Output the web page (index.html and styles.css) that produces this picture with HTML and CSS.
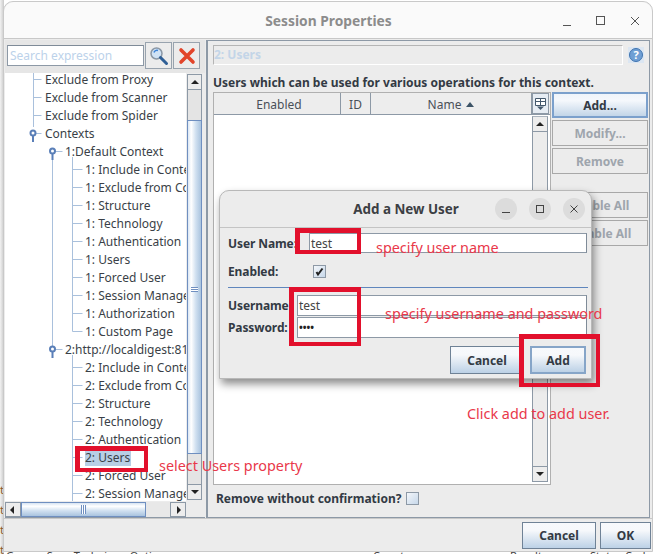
FILE: index.html
```html
<!DOCTYPE html>
<html lang="en">
<head>
<meta charset="utf-8">
<title>Session Properties</title>
<link rel="stylesheet" href="styles.css">
</head>
<body>
<div class="behind">
  <span class="b1">Groups Scan Technique Options</span>
  <span class="b2">Count</span>
  <span class="b3">Result</span>
  <span class="b4">Status Code</span>
</div>
<div class="strip"><span>t</span><span>t</span><span>t</span><span>t</span></div>
<main class="window">
  <header class="titlebar">
    <h1 class="title">Session Properties</h1>
    <div class="wm wm-main">
      <svg width="14" height="14" viewBox="0 0 14 14"><path d="M3 11.500h8" stroke="#555" fill="none"/></svg>
      <svg width="14" height="14" viewBox="0 0 14 14"><rect x="2.500" y="2.500" width="8" height="8" stroke="#555" fill="none"/></svg>
      <svg width="14" height="14" viewBox="0 0 14 14"><path d="M3 3l8 8M11 3l-8 8" stroke="#555" fill="none"/></svg>
    </div>
  </header>
  <div class="content">
    <section class="left">
      <div class="searchbar">
        <input class="search" placeholder="Search expression" aria-label="Search expression">
        <button class="iconbtn" aria-label="Search">
          <svg width="20" height="20" viewBox="0 0 20 20"><circle cx="7.500" cy="7.500" r="5.500" fill="#cfe2f5" stroke="#8a97a5" stroke-width="1.500"/><path d="M5 6.500a3 3 0 0 1 4-2" stroke="#3b82d6" stroke-width="1.500" fill="none"/><path d="M11.500 11.500l6 6" stroke="#2f5f96" stroke-width="3" stroke-linecap="round"/></svg>
        </button>
        <button class="iconbtn" aria-label="Clear">
          <svg width="18" height="18" viewBox="0 0 18 18"><path d="M3 3l12 12M15 3L3 15" stroke="#e2452b" stroke-width="3.600" stroke-linecap="round"/></svg>
        </button>
      </div>
      <div class="treegrid">
        <div class="tree">
          <svg class="treelines" width="186" height="428" viewBox="0 0 186 428">
            <g stroke="#a9c0dc" fill="none">
              <path d="M33.500 0V54M33.500 6.500h8M33.500 24.500h8M33.500 42.500h8M33.500 60.500h8"/>
              <path d="M52.500 78V276M52.500 78.500h10M52.500 276.500h10"/>
              <path d="M72.500 84V258.500M72.500 96.500h10M72.500 114.500h10M72.500 132.500h10M72.500 150.500h10M72.500 168.500h10M72.500 186.500h10M72.500 204.500h10M72.500 222.500h10M72.500 240.500h10M72.500 258.500h10"/>
              <path d="M72.500 282V428M72.500 294.500h10M72.500 312.500h10M72.500 330.500h10M72.500 348.500h10M72.500 366.500h10M72.500 384.500h10M72.500 402.500h10M72.500 420.500h10"/>
            </g>
            <g fill="#fff" stroke="#5a7fb8" stroke-width="2">
              <path d="M33 63v6M52.500 81v6M52.500 279v6" />
              <circle cx="33" cy="60" r="2.500"/>
              <circle cx="52.500" cy="78" r="2.500"/>
              <circle cx="52.500" cy="276" r="2.500"/>
            </g>
          </svg>
          <div class="row l1 first">Exclude from Proxy</div>
          <div class="row l1">Exclude from Scanner</div>
          <div class="row l1">Exclude from Spider</div>
          <div class="row l1">Contexts</div>
          <div class="row l2">1:Default Context</div>
          <div class="row l3">1: Include in Context</div>
          <div class="row l3">1: Exclude from Context</div>
          <div class="row l3">1: Structure</div>
          <div class="row l3">1: Technology</div>
          <div class="row l3">1: Authentication</div>
          <div class="row l3">1: Users</div>
          <div class="row l3">1: Forced User</div>
          <div class="row l3">1: Session Management</div>
          <div class="row l3">1: Authorization</div>
          <div class="row l3">1: Custom Page</div>
          <div class="row l2">2:http://localdigest:8181</div>
          <div class="row l3">2: Include in Context</div>
          <div class="row l3">2: Exclude from Context</div>
          <div class="row l3">2: Structure</div>
          <div class="row l3">2: Technology</div>
          <div class="row l3">2: Authentication</div>
          <div class="row l3"><span class="selected">2: Users</span></div>
          <div class="row l3">2: Forced User</div>
          <div class="row l3">2: Session Management</div>
        </div>
        <div class="vscroll tree-v">
          <span class="arrow up"></span>
          <span class="track short"></span>
          <span class="thumb"><i class="grip-h"></i></span>
          <span class="track rest"></span>
          <span class="arrow down"></span>
        </div>
        <div class="hscroll">
          <span class="arrow left-a"></span>
          <span class="hthumb"><i class="grip-v"></i></span>
          <span class="htrack"></span>
          <span class="arrow right-a"></span>
        </div>
      </div>
    </section>
    <section class="right">
      <div class="panelhead">
        <div class="paneltitle">2: Users</div>
        <svg class="help" width="16" height="16" viewBox="0 0 16 16"><rect width="16" height="16" fill="#dbe6f2"/><circle cx="8" cy="8" r="6.500" fill="#6f9fd4" stroke="#3f74b0"/><text x="8" y="12" class="helpq" text-anchor="middle">?</text></svg>
      </div>
      <p class="desc">Users which can be used for various operations for this context.</p>
      <div class="tablearea">
        <div class="table">
          <div class="thead">
            <span class="th c-enabled">Enabled</span>
            <span class="th c-id">ID</span>
            <span class="th c-name">Name <i class="sort"></i></span>
            <span class="corner">
              <svg width="13" height="14" viewBox="0 0 13 14"><path d="M1.500 1.500h10v7h-10zM1.500 4.500h10M6.500 1.500v7" stroke="#44586c" fill="#fff"/><path d="M3 9.500h7L6.500 13z" fill="#44586c"/></svg>
            </span>
          </div>
          <div class="tbody">
            <div class="tcells"></div>
            <div class="vscroll table-v">
              <span class="arrow up"></span>
              <span class="track grow"></span>
              <span class="arrow down"></span>
            </div>
          </div>
        </div>
        <div class="sidebtns">
          <button class="btn primary">Add...</button>
          <button class="btn off">Modify...</button>
          <button class="btn off">Remove</button>
          <div class="spacer"></div>
          <button class="btn off">Enable All</button>
          <button class="btn off">Disable All</button>
        </div>
      </div>
      <div class="confirm">
        <span class="lbl">Remove without confirmation?</span>
        <span class="check"></span>
      </div>
    </section>
  </div>
  <footer class="footer">
    <button class="btn blue cancel">Cancel</button>
    <button class="btn blue ok">OK</button>
  </footer>
</main>

<div class="dialog">
  <header class="dlghead">
    <h2 class="dlgtitle">Add a New User</h2>
    <div class="wm wm-dlg">
      <span class="circ"><svg width="12" height="12" viewBox="0 0 12 12"><path d="M2 9.500h8" stroke="#444" fill="none"/></svg></span>
      <span class="circ"><svg width="12" height="12" viewBox="0 0 12 12"><rect x="2.500" y="2.500" width="7" height="7" stroke="#444" fill="none"/></svg></span>
      <span class="circ"><svg width="12" height="12" viewBox="0 0 12 12"><path d="M2.500 2.500l7 7M9.500 2.500l-7 7" stroke="#444" fill="none"/></svg></span>
    </div>
  </header>
  <div class="dlgbody">
    <div class="frow fr1"><label class="lbl flabel">User Name:</label><div class="field">test</div></div>
    <div class="frow fr2"><label class="lbl flabel">Enabled:</label><span class="tick"><svg width="11" height="11" viewBox="0 0 11 11"><path d="M2.500 6l1.500 2.500 4.500-6" stroke="#222" stroke-width="2" fill="none"/></svg></span></div>
    <hr class="sep">
    <div class="frow fr3"><label class="lbl flabel short">Username:</label><div class="field">test</div></div>
    <div class="frow fr4"><label class="lbl flabel short">Password:</label><div class="field dots">••••</div></div>
    <div class="dlgbtns">
      <button class="btn blue dcancel">Cancel</button>
      <button class="btn blue dadd">Add</button>
    </div>
  </div>
</div>

<div class="mark m-name"></div>
<div class="mark m-cred"></div>
<div class="mark m-add"></div>
<div class="mark m-users"></div>
<span class="note n1">specify user name</span>
<span class="note n2">specify username and password</span>
<span class="note n3">Click add to add user.</span>
<span class="note n4">select Users property</span>
</body>
</html>
```
FILE: styles.css
```css
* { box-sizing: border-box; }
html, body { margin: 0; height: 100%; }
body {
  position: relative;
  width: 653px;
  height: 554px;
  overflow: hidden;
  background: #fff;
  font-family: "Noto Sans", sans-serif;
  font-size: 12px;
  color: #3a3f47;
}
button { font-family: inherit; margin: 0; padding: 0; }
.behind {
  position: absolute;
  left: 0;
  top: 549px;
  width: 653px;
  height: 5px;
  overflow: hidden;
  font-size: 11px;
  line-height: 14px;
  white-space: nowrap;
  color: #444;
}
.behind span { position: absolute; top: 0; }
.b1 { left: 6px; }
.b2 { left: 373px; }
.b3 { left: 510px; }
.b4 { left: 590px; }
.strip {
  position: absolute;
  left: 0;
  top: 0;
  width: 4px;
  height: 554px;
  display: flex;
  flex-direction: column;
  align-items: flex-end;
  gap: 6px;
  overflow: hidden;
  padding-top: 483px;
  background: linear-gradient(90deg, #f2f2f2, #c9c9c9);
  font-size: 11px;
  line-height: 14px;
  color: #8a5a2a;
}
.window {
  position: absolute;
  left: 3px;
  top: 1px;
  width: 650px;
  height: 551px;
  display: flex;
  flex-direction: column;
  background: #ececec;
  border: 1px solid #c9c9c9;
  border-radius: 10px 10px 0 0;
}
.titlebar {
  height: 37px;
  flex: none;
  position: relative;
  display: flex;
  align-items: center;
  justify-content: center;
  background: #fafafa;
  border-bottom: 1px solid #c8c8c8;
  border-radius: 10px 10px 0 0;
}
.title { margin: 0 0 0 1px; font-size: 13.800px; font-weight: 700; color: #8c8c8c; }
.wm { position: absolute; display: flex; align-items: center; }
.wm-main { right: 10px; top: 12px; gap: 20px; }
.content {
  flex: 1;
  display: flex;
  min-height: 0;
  padding: 1px 0 0 1px;
  gap: 1px;
}
.left {
  width: 200px;
  height: 478px;
  flex: none;
  display: flex;
  flex-direction: column;
  border-bottom: 1px solid #8d99a6;
}
.searchbar {
  height: 33px;
  flex: none;
  display: flex;
  align-items: flex-start;
  gap: 1px;
  padding: 2px 0 0 2px;
  background: #e6e6e6;
}
.search {
  width: 137px;
  height: 21px;
  margin-top: 3px;
  padding: 0 2px;
  font: 12px "Noto Sans", sans-serif;
  background: #fff;
  border: 1px solid #8d99a6;
  border-top-color: #7f8b98;
}
.search::placeholder { color: #bcd2ea; opacity: 1; }
.iconbtn {
  width: 27px;
  height: 27px;
  display: flex;
  align-items: center;
  justify-content: center;
  background: #ececec;
  border: 1px solid #98a3ae;
}
.treegrid {
  flex: 1;
  display: grid;
  grid-template-columns: 182px 15px 3px;
  grid-template-rows: 428px 16px;
}
.tree {
  position: relative;
  background: #fff;
  overflow: hidden;
  width: 181px;
}
.treelines { position: absolute; left: -5px; top: 0; }
.row {
  position: relative;
  height: 18px;
  line-height: 16px;
  white-space: nowrap;
}
.first { margin-top: -1px; }
.l1 { padding-left: 40px; }
.l2 { padding-left: 60px; }
.l3 { padding-left: 80px; }
.selected { display: inline-block; padding-right: 1px; height: 16px; background: #b8cfe5; }
.vscroll { display: flex; flex-direction: column; background: #eaeaea; }
.tree-v {
  width: 15px;
  height: 426px;
  margin-top: 1px;
  border: 1px solid #8d99a6;
}
.arrow {
  position: relative;
  flex: none;
  display: block;
  height: 15px;
  background: #ededed;
}
.arrow::after { content: ""; position: absolute; left: 3px; border-left: 4px solid transparent; border-right: 4px solid transparent; }
.arrow.up { border-bottom: 1px solid #8d99a6; }
.arrow.down { border-top: 1px solid #8d99a6; }
.up::after { top: 5px; border-bottom: 4px solid #222; }
.down::after { top: 5px; border-top: 4px solid #222; }
.track.short { height: 30px; flex: none; background: #e4e4e4; }
.track.rest { height: 30px; flex: none; background: #e4e4e4; }
.track.grow { flex: 1; background: #ececec; }
.thumb {
  flex: 1;
  position: relative;
  border: 1px solid #6f8fc0;
  margin: 0 -1px;
  background: linear-gradient(90deg, #dbe7f4, #fff 25%, #d0e0f0 60%, #a9c3de);
}
.grip-h {
  position: absolute;
  left: 3px;
  right: 3px;
  top: 50%;
  height: 5px;
  border-top: 1px solid #6f8fc0;
  border-bottom: 1px solid #6f8fc0;
  background: linear-gradient(#fff 40%, #6f8fc0 40%, #6f8fc0 70%, #fff 70%);
}
.hscroll {
  grid-column: 1;
  grid-row: 2;
  display: flex;
  width: 181px;
  height: 15px;
  margin-top: 1px;
  background: #e8e8e8;
}
.hscroll .arrow { width: 16px; height: 15px; border: 1px solid #8d99a6; }
.left-a::after {
  left: 4px; top: 3px;
  border: 0;
  border-top: 4px solid transparent; border-bottom: 4px solid transparent; border-right: 4px solid #222;
}
.right-a::after {
  left: 6px; top: 3px;
  border: 0;
  border-top: 4px solid transparent; border-bottom: 4px solid transparent; border-left: 4px solid #222;
}
.hthumb {
  width: 125px;
  flex: none;
  position: relative;
  border: 1px solid #6f8fc0;
  background: linear-gradient(#d7e4f2, #fff 25%, #d0e0f0 60%, #a9c3de);
}
.grip-v {
  position: absolute;
  top: 2px;
  bottom: 2px;
  left: 59px;
  width: 5px;
  border-left: 1px solid #6f8fc0;
  border-right: 1px solid #6f8fc0;
  background: linear-gradient(90deg, #fff 40%, #6f8fc0 40%, #6f8fc0 60%, #fff 60%);
}
.htrack { flex: 1; background: #e8e8e8; }
.right {
  flex: none;
  width: 444px;
  height: 478px;
  padding: 4px 0 0 5px;
  background: #ececec;
  border: 1px solid #8d99a6;
  border-left-width: 2px;
}
.panelhead { display: flex; align-items: center; gap: 5px; height: 20px; }
.paneltitle {
  width: 410px;
  height: 20px;
  line-height: 18px;
  font-weight: 700;
  color: #c3d5e8;
  border: 1px solid #b9b9b9;
  border-color: #b5b5b5 #fff #fff #b5b5b5;
  background: #ececec;
}
.help { width: 16px; height: 16px; }
.helpq { font: 700 11px "Noto Sans", sans-serif; fill: #fff; }
.desc {
  margin: 7px 0 0;
  height: 20px;
  line-height: 22px;
  font-weight: 700;
  color: #333a44;
  white-space: nowrap;
}
.tablearea { display: flex; gap: 1px; height: 393px; }
.table {
  width: 338px;
  height: 393px;
  flex: none;
  display: flex;
  flex-direction: column;
  border: 1px solid #b0b0b0;
  background: #fff;
}
.thead { display: flex; height: 22px; flex: none; background: #ededed; border-bottom: 1px solid #8d99a6; }
.th {
  display: flex;
  align-items: center;
  justify-content: center;
  gap: 5px;
  padding-top: 1px;
  border-right: 1px solid #8d99a6;
  color: #4a5058;
}
.c-enabled { width: 127px; padding-left: 4px; }
.c-id { width: 30px; }
.c-name { width: 161px; }
.sort {
  width: 0; height: 0;
  border-left: 4.500px solid transparent;
  border-right: 4.500px solid transparent;
  border-bottom: 5px solid #3c5366;
}
.corner {
  width: 17px;
  flex: none;
  display: flex;
  justify-content: center;
  padding-top: 3px;
  background: #e6ecf3;
  border: 1px solid #8d99a6;
}
.tbody { flex: 1; display: flex; min-height: 0; }
.tcells { flex: 1; background: #fff; }
.table-v {
  width: 16px;
  margin: 1px 2px 2px 0;
  border: 1px solid #8d99a6;
  border-top-color: #aab3bd;
}
.sidebtns { display: flex; flex-direction: column; gap: 2px; width: 96px; }
.btn {
  height: 26px;
  flex: none;
  font-size: 12px;
  font-weight: 700;
  border: 1px solid #8d99a6;
  color: #333a44;
}
.primary {
  border: 2px solid #7ba0cc;
  background: linear-gradient(#eff4fa, #f5f8fc 30%, #c2d5e8);
}
.off { background: #ececec; color: #9ea5ad; border-color: #a8a8a8; }
.spacer { height: 14px; flex: none; }
.confirm { display: flex; align-items: center; gap: 5px; height: 26px; padding-left: 3px; }
.lbl { font-weight: 700; color: #333a44; white-space: nowrap; }
.check {
  width: 13px; height: 13px;
  border: 1px solid #8d99a6;
  background: linear-gradient(135deg, #f3f6fa, #c7d8ea);
}
.footer {
  height: 33px;
  flex: none;
  display: flex;
  justify-content: flex-end;
  gap: 4px;
  padding: 3px 1px 0 0;
  border-top: 1px solid #c8c8c8;
}
.blue {
  height: 27px;
  background: linear-gradient(#f7f9fc, #f6f8fb 30%, #bcd1e6);
  border: 1px solid #6f8296;
}
.cancel { width: 74px; }
.ok { width: 51px; }
.dialog {
  position: absolute;
  left: 219px;
  top: 190px;
  width: 373px;
  height: 189px;
  display: flex;
  flex-direction: column;
  background: #ececec;
  border: 1px solid #b8b8b8;
  border-radius: 10px 10px 0 0;
  box-shadow: 2px 5px 9px rgba(0, 0, 0, 0.45);
}
.dlghead {
  position: relative;
  height: 37px;
  flex: none;
  display: flex;
  align-items: center;
  justify-content: center;
  border-bottom: 1px solid #c4c4c4;
}
.dlgtitle { margin: 0 0 0 1px; font-size: 13.400px; font-weight: 700; color: #3c3f44; }
.wm-dlg { right: 6px; top: 7px; gap: 12px; }
.circ {
  width: 22px; height: 22px;
  display: flex;
  align-items: center;
  justify-content: center;
  border-radius: 50%;
  background: #dcdcdc;
}
.dlgbody { position: relative; flex: 1; padding: 0 4px 0 8px; }
.frow { display: flex; align-items: center; }
.flabel { width: 81px; flex: none; letter-spacing: -0.1px; }
.flabel.short { width: 69px; }
.field {
  flex: 1;
  height: 21px;
  background: #fff;
  border: 1px solid #8d99a6;
  border-right-color: #7f8b98;
  padding-left: 1px;
  color: #444;
  line-height: 20px;
}
.fr1 { height: 20px; margin-top: 5px; }
.fr1 .field { height: 20px; line-height: 19px; }
.fr2 { height: 20px; margin-top: 8px; }
.tick {
  width: 13px; height: 13px;
  margin-left: 4px;
  display: flex;
  align-items: center;
  justify-content: center;
  border: 1px solid #8d99a6;
  background: linear-gradient(135deg, #f3f6fa, #c7d8ea);
}
.sep { height: 1px; margin: 6px 0 0 0; border: 0; background: #5f86bd; width: 360px; }
.fr3 { height: 21px; margin-top: 7px; }
.fr4 { height: 21px; margin-top: 1px; }
.dots { font-size: 10px; font-weight: 700; line-height: 19px; color: #222; }
.dlgbtns { display: flex; justify-content: flex-end; gap: 6px; margin-top: 8px; padding-right: 1px; }
.dcancel { width: 74px; height: 28px; }
.dadd { width: 56px; height: 28px; border: 2px solid #86a5c8; }
.mark {
  position: absolute;
  border-style: solid;
  border-color: #e2102c;
  border-width: 5px 4px 4px 5px;
}
.m-name { left: 295px; top: 228px; width: 66px; height: 26px; }
.m-cred { left: 289px; top: 287px; width: 72px; height: 59px; }
.m-add { left: 519px; top: 334px; width: 81px; height: 53px; }
.m-users { left: 75px; top: 446px; width: 73px; height: 26px; }
.note {
  position: absolute;
  color: #e9384a;
  font-size: 14.400px;
  line-height: 18px;
  white-space: nowrap;
}
.n1 { left: 376px; top: 239px; }
.n2 { left: 385px; top: 305px; }
.n3 { left: 467px; top: 405px; }
.n4 { left: 159px; top: 457px; }
```
